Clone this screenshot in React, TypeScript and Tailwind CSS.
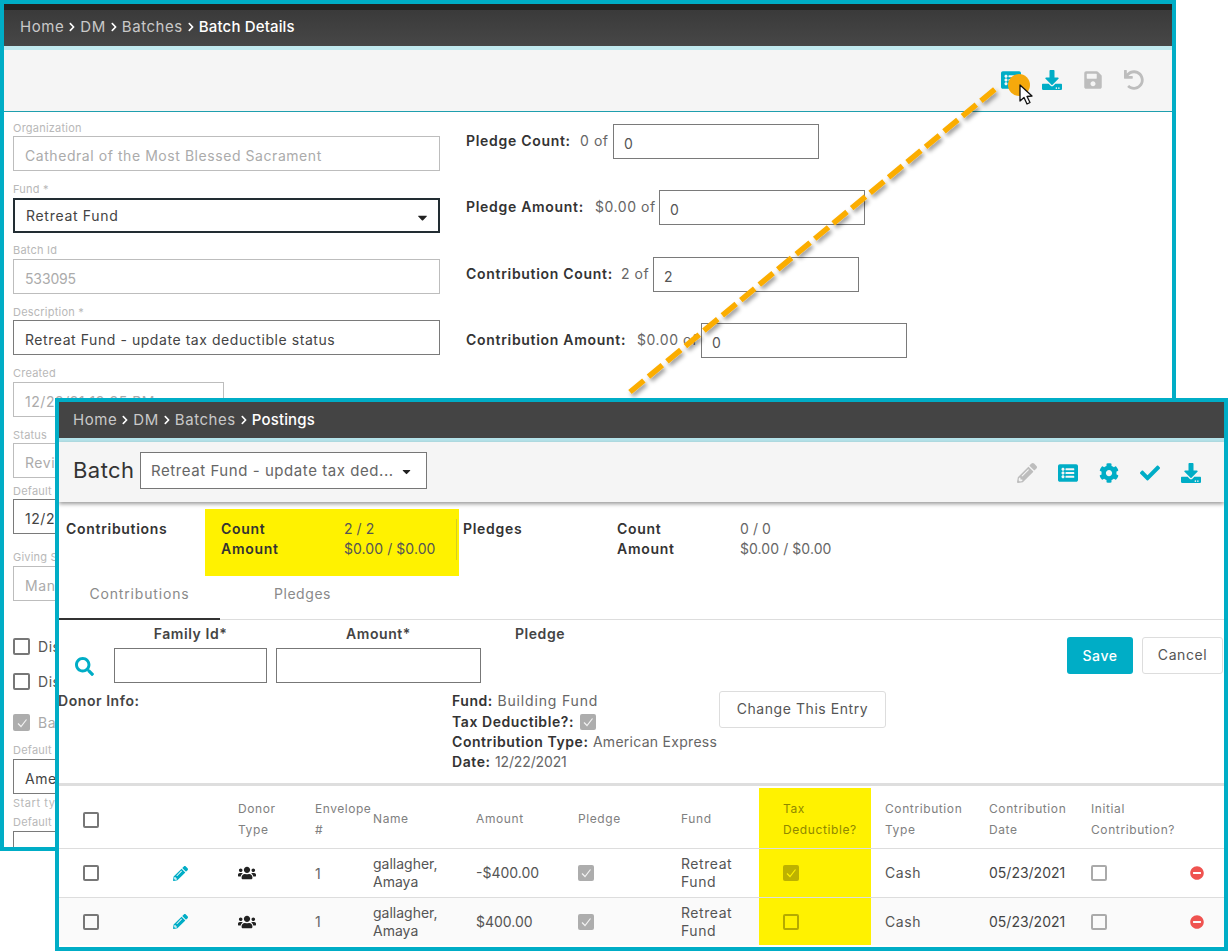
import React from "react";
import { FaCheck, FaCog, FaDownload, FaListAlt, FaMinusCircle, FaPencilAlt, FaSave, FaSearch, FaUndo, FaUsers, FaChevronRight, FaCaretDown } from "react-icons/fa";

function Crumbs({ items, last, pad }: { items: string[]; last: string; pad: string }) {
  return (
    <div className={"flex items-center text-[15px] text-[#c9c9c9] " + pad}>
      {items.map((t) => (
        <React.Fragment key={t}>
          <span>{t}</span>
          <FaChevronRight className="mx-[3px] text-white" size={10} />
        </React.Fragment>
      ))}
      <span className="text-white font-medium tracking-[0.01em]">{last}</span>
    </div>
  );
}

function Field({ label, value, className, labelGap, variant, width, caret, tight }: { label: string; value: string; className: string; labelGap: string; variant: "off" | "on" | "focus"; width?: string; caret?: boolean; tight?: boolean }) {
  const box =
    variant === "off"
      ? "border border-[#bdbdbd] text-[#ababab] pt-[3px]"
      : variant === "on"
      ? "border border-[#7a7a7a] text-[#444] pt-[3px]"
      : "border-2 border-[#222d33] text-[#444] tracking-[0.05em]";
  return (
    <div className={className}>
      <div className={"h-[14px] text-[11px] leading-[14px] text-[#b8b8b8] tracking-[0.02em] " + labelGap}>{label}</div>
      <div className={"h-[35px] flex items-center pl-[11px] text-[14px] whitespace-nowrap overflow-hidden " + box + " " + (width ?? "w-[427px]")}>
        <span className={tight ? "tracking-[-0.01em]" : ""}>{value}</span>
        {caret && <FaCaretDown className="ml-auto mr-[8px] mt-[3px] text-[#222]" size={15} />}
      </div>
    </div>
  );
}

function Check({ checked, color, big }: { checked?: boolean; color: string; big?: boolean }) {
  const styles: Record<string, string> = {
    dark: "border-2 border-[#777]",
    gray: "border-2 border-[#aaa]",
    fillgray: "bg-[#adadad]",
    oliveEmpty: "border-2 border-[#b5aa00]",
    oliveFill: "bg-[#bdb200]",
  };
  return (
    <span className={"inline-flex shrink-0 items-center justify-center rounded-[2px] " + (big ? "w-[17px] h-[17px] " : "w-4 h-4 ") + styles[color]}>
      {checked && (
        <svg width="12" height="12" viewBox="0 0 12 12" fill="none">
          <path d="M2 6.5 L5 9.5 L10.5 2.5" stroke={color === "oliveFill" ? "#fff200" : "#f2f2f2"} strokeWidth="1.2" />
        </svg>
      )}
    </span>
  );
}

function CountRow({ label, labelW, value, valueW, inputVal, className }: { label: string; labelW: string; value: string; valueW: string; inputVal: string; className: string }) {
  return (
    <div className={"flex items-center h-[35px] text-[14px] " + className}>
      <span className={"font-semibold text-[#333] whitespace-nowrap tracking-[0.05em] pb-[2px] " + labelW}>{label}</span>
      <span className={"text-[#666] whitespace-nowrap pb-[2px] " + valueW}>{value}</span>
      <div className="w-[206px] h-[35px] border border-[#7a7a7a] flex items-center pl-[10px] pt-[3px] text-[#555]">{inputVal}</div>
    </div>
  );
}

function Row({ amount, taxChecked, bg, height }: { amount: string; taxChecked: boolean; bg: string; height: string }) {
  return (
    <div className={"grid grid-cols-[91px_88px_77px_58px_103px_102px_103px_78px_112px_118px_102px_94px_39px] text-[14px] text-[#555] items-center " + bg + " " + height}>
      <div className="pl-6 flex"><Check color="dark" /></div>
      <div className="pl-[23px] flex"><FaPencilAlt className="text-[#00adc6]" size={15} /></div>
      <div className="flex"><FaUsers className="text-[#222]" size={18} /></div>
      <div className="text-[#666]">1</div>
      <div className="leading-[18px] tracking-normal">gallagher,<br />Amaya</div>
      <div className="tracking-normal pb-px">{amount}</div>
      <div className="flex"><Check checked color="fillgray" /></div>
      <div className="leading-[18px]">Retreat<br />Fund</div>
      <div className="pl-6 h-full flex items-center bg-[#fff200]"><Check checked={taxChecked} color={taxChecked ? "oliveFill" : "oliveEmpty"} /></div>
      <div className="pl-[14px] pb-px">Cash</div>
      <div className="text-[#444] tracking-normal pb-px">05/23/2021</div>
      <div className="flex"><Check color="gray" /></div>
      <div className="pl-[5px] flex"><FaMinusCircle className="text-[#ef5350]" size={14} /></div>
    </div>
  );
}

export default function App() {
  return (
    <div className="relative w-[1228px] h-[951px] bg-white overflow-hidden font-['Inter',sans-serif] tracking-[0.035em]">
      {/* Back window */}
      <div className="absolute left-0 top-0 w-[1176px] h-[851px] border-4 border-[#00adc6] bg-white overflow-hidden flex flex-col">
        <div className="h-[42px] shrink-0 bg-[#444] flex flex-col">
          <div className="h-[6px] bg-[#232323]" />
          <div className="flex-1 flex items-center pb-[2px] bg-linear-to-b from-[#3a3a3a] to-[#474747]">
            <Crumbs items={["Home", "DM", "Batches"]} last="Batch Details" pad="pl-4" />
          </div>
        </div>
        <div className="h-[4px] shrink-0 bg-[#c1e9ef]" />
        <div className="h-[62px] shrink-0 bg-[#f5f5f5] border-b border-[#1f9fae] flex items-center justify-end gap-[21px] pr-[28px] pb-[2px]">
          <FaListAlt className="text-[#00adc6]" size={20} />
          <FaDownload className="text-[#00adc6]" size={20} />
          <FaSave className="text-[#bdbdbd]" size={20} />
          <FaUndo className="text-[#bdbdbd]" size={20} />
        </div>
        <div className="flex flex-1 min-h-0">
          <div className="ml-[9px] w-[427px] shrink-0">
            <Field className="mt-[9px]" labelGap="mb-[1px]" label="Organization" value="Cathedral of the Most Blessed Sacrament" variant="off" />
            <Field className="mt-[11px]" labelGap="mb-[2px]" label="Fund *" value="Retreat Fund" variant="focus" caret />
            <Field className="mt-[10px]" labelGap="mb-[2px]" label="Batch Id" value="533095" variant="off" tight />
            <Field className="mt-[11px]" labelGap="mb-[1px]" label="Description *" value="Retreat Fund - update tax deductible status" variant="on" />
            <Field className="mt-[11px]" labelGap="mb-[2px]" label="Created" value="12/22/21 12:35 PM" variant="off" width="w-[211px]" />
            <Field className="mt-[11px]" labelGap="mb-[1px]" label="Status" value="Review" variant="off" />
            <Field className="mt-[6px]" labelGap="mb-[1px]" label="Default Date" value="12/22/2021" variant="on" />
            <Field className="mt-[16px]" labelGap="mb-[2px]" label="Giving Source" value="Manual" variant="off" />
            <div className="mt-[37px] flex items-center gap-2 text-[14px] text-[#555] h-[17px]"><Check color="dark" big /><span>Disable</span></div>
            <div className="mt-[18px] flex items-center gap-2 text-[14px] text-[#555] h-[17px]"><Check color="dark" big /><span>Disable</span></div>
            <div className="mt-[24px] flex items-center gap-2 text-[14px] text-[#aaa] h-[17px]"><Check checked color="fillgray" big /><span>Balance</span></div>
            <Field className="mt-[12px]" labelGap="mb-[2px]" label="Default Type" value="American Express" variant="on" />
            <div className="mt-[2px] h-[14px] text-[11px] leading-[14px] text-[#b8b8b8]">Start typing</div>
            <Field className="mt-[5px]" labelGap="mb-[2px]" label="Default Fund" value="" variant="on" />
          </div>
          <div className="ml-[26px] flex-1">
            <CountRow className="mt-[12px]" label="Pledge Count:" labelW="w-[114px]" value="0 of" valueW="w-[33px]" inputVal="0" />
            <CountRow className="mt-[31px]" label="Pledge Amount:" labelW="w-[129px]" value="$0.00 of" valueW="w-[64px]" inputVal="0" />
            <CountRow className="mt-[32px]" label="Contribution Count:" labelW="w-[155px]" value="2 of" valueW="w-[32px]" inputVal="2" />
            <CountRow className="mt-[31px]" label="Contribution Amount:" labelW="w-[171px]" value="$0.00 of" valueW="w-[64px]" inputVal="0" />
          </div>
        </div>
      </div>

      {/* Annotation arrow */}
      <svg className="absolute left-0 top-0 pointer-events-none" width="1228" height="951" viewBox="0 0 1228 951" fill="none">
        <defs>
          <filter id="sh" x="-10%" y="-10%" width="120%" height="120%">
            <feDropShadow dx="2" dy="3" stdDeviation="2" floodColor="#000" floodOpacity="0.4" />
          </filter>
        </defs>
        <path d="M630 392 L997 87.5" stroke="#fbad03" strokeWidth="5.5" strokeDasharray="18 6" filter="url(#sh)" />
        <circle cx="1019" cy="85" r="11" fill="#f5a90c" />
        <path d="M1020 85 L1020 101 L1024 97.5 L1027 104 L1030 102.5 L1027 96.5 L1032 96 Z" fill="#fff" stroke="#111" strokeWidth="1.3" strokeLinejoin="round" />
      </svg>

      {/* Front window */}
      <div className="absolute left-[55px] top-[398px] w-[1173px] h-[553px] border-4 border-[#00adc6] bg-white overflow-hidden flex flex-col">
        <div className="h-[36px] shrink-0 bg-[#444] flex items-center">
          <Crumbs items={["Home", "DM", "Batches"]} last="Postings" pad="pl-[14px]" />
        </div>
        <div className="h-[4px] shrink-0 bg-[#b5e3ea]" />
        <div className="relative h-[60px] shrink-0 bg-[#f5f5f5] shadow-[0_2px_4px_rgba(0,0,0,0.4)] flex items-center pl-[14px]">
          <span className="text-[22px] text-[#333] tracking-[0.02em] w-[67px] pb-[3px]">Batch</span>
          <div className="w-[287px] h-[37px] mb-[3px] border border-[#777] bg-white flex items-center pl-[10px] pt-[2px] text-[15px] text-[#666] whitespace-nowrap">
            <span>Retreat Fund - update tax ded...</span>
            <FaCaretDown className="ml-auto mr-[13px] text-[#222]" size={13} />
          </div>
          <div className="ml-auto flex items-center gap-[21px] pr-[23px] pt-px">
            <FaPencilAlt className="text-[#bdbdbd]" size={20} />
            <FaListAlt className="text-[#00adc6]" size={20} />
            <FaCog className="text-[#00adc6]" size={20} />
            <FaCheck className="text-[#00adc6]" size={20} />
            <FaDownload className="text-[#00adc6]" size={20} />
          </div>
        </div>
        <div className="mt-[7px] h-[67px] shrink-0 flex text-[14px] leading-[20px]">
          <div className="w-[146px] pl-[7px] pt-[10px] font-semibold text-[#333] tracking-[0.05em]">Contributions</div>
          <div className="relative w-[254px] h-[67px] bg-[#fff200] pl-[16px] pt-[10px] flex">
            <div className="w-[123px] font-semibold text-[#333] tracking-[0.05em]">Count<br />Amount</div>
            <div className="text-[#555] tracking-[0.005em]">2 / 2<br />$0.00 / $0.00</div>
            <div className="absolute right-[2px] top-[10px] h-[41px] w-px bg-[#d8cf20]" />
          </div>
          <div className="w-[158px] pl-[4px] pt-[10px] font-semibold text-[#333] tracking-[0.05em]">Pledges</div>
          <div className="flex pt-[10px]">
            <div className="w-[123px] font-semibold text-[#333] tracking-[0.05em]">Count<br />Amount</div>
            <div className="text-[#666] tracking-[0.005em]">0 / 0<br />$0.00 / $0.00</div>
          </div>
        </div>
        <div className="h-[44px] shrink-0 flex border-b border-[#ddd] text-[14px] text-[#8a8a8a]">
          <div className="w-[161px] h-[44px] border-b-2 border-[#333] flex items-center justify-center pb-[7px] tracking-[0.06em]">Contributions</div>
          <div className="w-[165px] flex items-center justify-center pb-[8px]">Pledges</div>
        </div>
        <div className="h-[63px] shrink-0 flex pl-[16px]">
          <div className="w-[39px] pt-[37px]"><FaSearch className="text-[#00adc6]" size={19} /></div>
          <div className="w-[153px]">
            <div className="h-[28px] flex items-center justify-center pb-[2px] text-[14px] font-semibold text-[#444]">Family Id*</div>
            <div className="h-[35px] border border-[#777]" />
          </div>
          <div className="w-[205px] ml-[9px]">
            <div className="h-[28px] flex items-center justify-center pb-[2px] text-[14px] font-semibold text-[#444]">Amount*</div>
            <div className="h-[35px] border border-[#777]" />
          </div>
          <div className="w-[118px]">
            <div className="h-[28px] flex items-center justify-center pb-[2px] text-[14px] font-semibold text-[#444]">Pledge</div>
          </div>
          <div className="ml-auto mr-px mt-[17px] flex gap-[9px] h-[37px] text-[14px]">
            <div className="w-[66px] rounded-[3px] bg-[#00adc6] text-white font-medium flex items-center justify-center">Save</div>
            <div className="w-[81px] rounded-[3px] border border-[#ddd] text-[#555] flex items-center justify-center pb-[2px]">Cancel</div>
          </div>
        </div>
        <div className="h-[100px] shrink-0 flex text-[14px] leading-[20px]">
          <div className="w-[394px] pt-[8px] font-semibold text-[#444] -ml-px">Donor Info:</div>
          <div className="w-[267px] pt-[8px] text-[#666] whitespace-nowrap">
            <div><span className="font-semibold text-[#333]">Fund:</span> <span className="tracking-[0.06em]">Building Fund</span></div>
            <div className="flex items-center gap-[6px] h-[21px]"><span className="font-semibold text-[#333]">Tax Deductible?:</span><Check checked color="fillgray" /></div>
            <div><span className="font-semibold text-[#333]">Contribution Type:</span> <span className="tracking-[0.02em]">American Express</span></div>
            <div><span className="font-semibold text-[#333]">Date:</span> <span className="tracking-[-0.01em]">12/22/2021</span></div>
          </div>
          <div className="mt-[8px] w-[167px] h-[37px] rounded-[3px] border border-[#ddd] text-[#555] flex items-center justify-center pb-px">Change This Entry</div>
        </div>
        <div className="h-[3px] shrink-0 bg-[#dedede]" />
        <div className="h-[2px] shrink-0" />
        <div className="grid grid-cols-[91px_88px_77px_58px_103px_102px_103px_78px_112px_118px_102px_94px_39px] h-[61px] shrink-0 border-b border-[#ddd] text-[12px] leading-[21px] text-[#808080] items-center tracking-[0.05em]">
          <div className="pl-6 flex pt-[4px]"><Check color="dark" /></div>
          <div />
          <div className="pt-px">Donor<br />Type</div>
          <div className="pt-px tracking-[0.045em]">Envelope<br />#</div>
          <div className="pt-px">Name</div>
          <div className="pt-px">Amount</div>
          <div className="pt-px">Pledge</div>
          <div className="pt-px">Fund</div>
          <div className="pl-6 h-full flex items-center bg-[#fff200] text-[#8f8800] pt-px"><span>Tax<br />Deductible?</span></div>
          <div className="pl-[14px] pt-px">Contribution<br />Type</div>
          <div className="pt-px">Contribution<br />Date</div>
          <div className="pt-px">Initial<br />Contribution?</div>
          <div />
        </div>
        <Row amount="-$400.00" taxChecked bg="bg-white border-b border-[#ddd]" height="h-[49px]" />
        <Row amount="$400.00" taxChecked={false} bg="bg-[#fafafa]" height="h-[47px]" />
      </div>
    </div>
  );
}
